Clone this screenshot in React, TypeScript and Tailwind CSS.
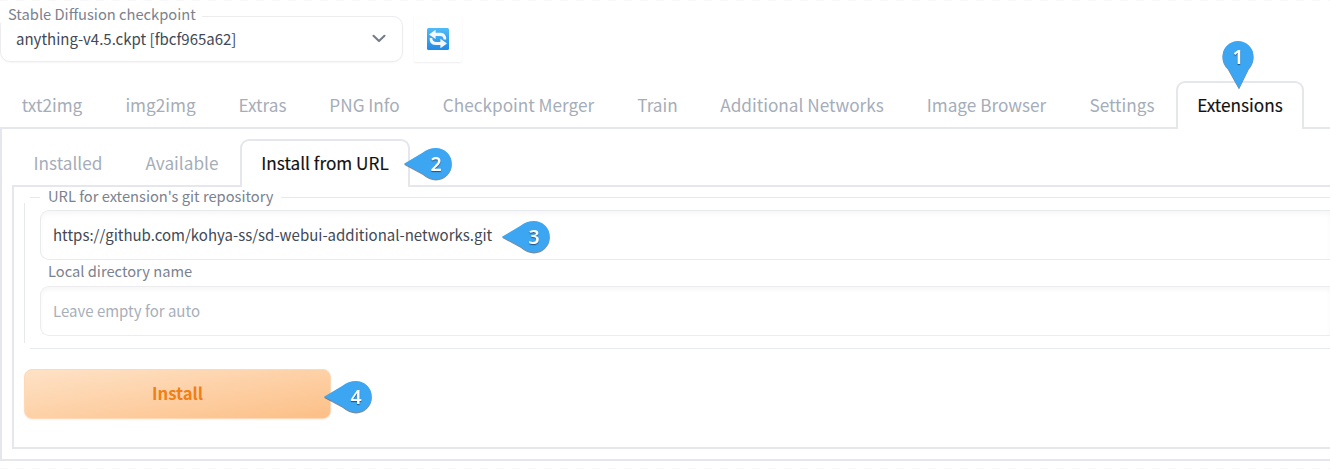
import type { ReactNode } from "react";

type TabProps = { children: ReactNode; active?: boolean; className: string };

function Tab({ children, active, className }: TabProps) {
  return (
    <button
      className={`flex h-[48px] shrink-0 items-center justify-center whitespace-nowrap text-[17.2px] leading-none ${
        active
          ? "rounded-t-[9px] border-[2.4px] border-b-0 border-[#e6e7ec] bg-white pb-[3px] text-[#111] [-webkit-text-stroke:0.15px_#111]"
          : "border-b-2 border-[#e6e7ec] pt-[2px] text-[#a5adb9]"
      } ${className}`}
    >
      {children}
    </button>
  );
}

function Pin({ n, up, className }: { n: number; up?: boolean; className: string }) {
  return (
    <svg
      className={`pointer-events-none absolute overflow-visible drop-shadow-[0_1px_0.5px_rgba(40,60,80,0.6)] ${className}`}
      width="48"
      height="48"
      viewBox="0 0 48 48"
    >
      {up ? (
        <path d="M17 47.5 L5.8 27.5 Q0.5 22.5 0.5 15.5 A15.5 15.5 0 1 1 31.5 15.5 Q31.5 22.5 26.8 27.5 Z" fill="#3da6f2" />
      ) : (
        <path d="M0 15.7 L18.5 4.8 Q24 0 32 0 A15.7 15.7 0 1 1 32 31.4 Q25 31.4 19 26 Z" fill="#3da6f2" />
      )}
      <text
        x={up ? 16 : 32}
        y={up ? 22.5 : 22.8}
        textAnchor="middle"
        className="fill-white font-['Noto_Sans',sans-serif] text-[19.5px] font-semibold [text-shadow:0_1px_1px_rgba(20,50,80,0.7)]"
      >
        {n}
      </text>
    </svg>
  );
}

function RefreshIcon() {
  return (
    <svg width="22" height="22" viewBox="0 0 22 22">
      <defs>
        <linearGradient id="refreshBlue" x1="0" y1="0" x2="0" y2="1">
          <stop offset="0" stopColor="#4fbcf8" />
          <stop offset="1" stopColor="#2389e4" />
        </linearGradient>
      </defs>
      <rect width="22" height="22" rx="1.5" fill="url(#refreshBlue)" />
      <path d="M2 6.4 L8.6 1.8 V4.8 H13.6 Q19.2 5 19.2 11.4 H16.6 Q16.4 8 13.2 8 H8.6 V11 Z" fill="#f4f8fc" />
      <path d="M20 15.4 L13.4 10.8 V13.9 H8.6 Q5.6 13.8 5.2 10 H2.6 Q2.4 17 8.2 17 H13.4 V20.2 Z" fill="#f4f8fc" />
    </svg>
  );
}

function Dashes() {
  return <div className="h-px w-full shrink-0 bg-[repeating-linear-gradient(90deg,#f8f8f9_0_8px,#ffffff_8px_16px)]" />;
}

export default function App() {
  return (
    <div className="relative flex h-[470px] w-[1330px] flex-col overflow-hidden bg-white font-['Noto_Sans_CJK_SC','Noto_Sans',sans-serif]">
      <Dashes />
      {/* Checkpoint selector */}
      <header className="flex h-[80px] shrink-0 items-start pt-[15px]">
        <div className="relative flex h-[46px] w-[403px] items-center justify-between rounded-[10px] border-[1.5px] border-[#ececef] pb-[2px] pl-[15px] pr-[16px] shadow-[0_1px_2px_rgba(0,0,0,0.04)]">
          <label className="absolute left-0 top-[-12px] bg-white pl-[7px] pr-[6px] text-[14.7px] leading-[18px] text-[#7b828f]">
            Stable Diffusion checkpoint
          </label>
          <span className="text-[15px] leading-none text-[#414957]">anything-v4.5.ckpt [fbcf965a62]</span>
          <svg width="14" height="10" viewBox="0 0 14 10" fill="none" stroke="#757c8c" strokeWidth="2.1">
            <path d="M1.5 2.8 L7 8.1 L12.5 2.8" strokeLinecap="round" strokeLinejoin="round" />
          </svg>
        </div>
        <button className="ml-[11px] flex h-[46px] w-[48px] items-center justify-center rounded-[2px] bg-white shadow-[0_1px_2px_rgba(0,0,0,0.07)]">
          <RefreshIcon />
        </button>
      </header>

      {/* Main tabs */}
      <nav className="flex h-[48px] shrink-0">
        <Tab className="w-[104px]">txt2img</Tab>
        <Tab className="w-[113px]">img2img</Tab>
        <Tab className="w-[91px]">Extras</Tab>
        <Tab className="w-[113px]">PNG Info</Tab>
        <Tab className="w-[195px]">Checkpoint Merger</Tab>
        <Tab className="w-[83px]">Train</Tab>
        <Tab className="w-[206px]">Additional Networks</Tab>
        <Tab className="w-[163px]">Image Browser</Tab>
        <Tab className="w-[108px]">Settings</Tab>
        <Tab active className="w-[128px]">Extensions</Tab>
        <div className="flex-1 border-b-2 border-[#e6e7ec]" />
      </nav>

      <main className="flex h-[332px] shrink-0 flex-col border-b-2 border-l-2 border-[#e6e7ec] pl-[10px] pt-[10px]">
        {/* Extension tabs */}
        <nav className="flex h-[48px] shrink-0">
          <Tab className="w-[112px]">Installed</Tab>
          <Tab className="w-[116px]">Available</Tab>
          <Tab active className="w-[170px]">Install from URL</Tab>
          <div className="flex-1 border-b-2 border-[#e6e7ec]" />
        </nav>

        <section className="flex h-[262px] shrink-0 flex-col border-b-2 border-l-2 border-[#e6e7ec] pl-[10px] pt-[10px]">
          <div className="relative flex h-[152px] shrink-0 flex-col border border-r-0 border-[#e8e9ed] pl-[15px]">
            {/* Breaks in the outline at its left corners */}
            <span className="absolute left-[-1px] top-[-1px] h-[6px] w-[6px] bg-white" />
            <span className="absolute bottom-[-1px] left-[-1px] h-[6px] w-[6px] bg-white" />
            <label className="relative mt-[-11px] flex h-[23px] w-fit items-start bg-white pl-[8px] pr-[8px] text-[14.7px] leading-[18px] text-[#7b828f]">
              URL for extension&apos;s git repository
            </label>
            <div className="flex h-[50px] shrink-0 items-center rounded-l-[9px] border-[1.5px] border-r-0 border-[#e9eaed] pb-[2px] pl-[12px] text-[15px] leading-none text-[#414957] shadow-[inset_0_3px_4px_rgba(0,0,0,0.035)]">
              https://github.com/kohya-ss/sd-webui-additional-networks.git
            </div>
            <label className="flex h-[26px] shrink-0 items-center pb-[3px] pl-[8px] text-[14.7px] leading-none text-[#7b828f]">
              Local directory name
            </label>
            <div className="flex h-[50px] shrink-0 items-center rounded-l-[9px] border-[1.5px] border-r-0 border-[#ececef] pb-[2px] pl-[12px] text-[15px] leading-none text-[#a7afba] shadow-[inset_0_3px_4px_rgba(0,0,0,0.035)]">
              Leave empty for auto
            </div>
          </div>
          <button className="mt-[20px] flex h-[50px] w-[307px] shrink-0 items-center justify-center rounded-[8px] border border-[#fdd9b8] bg-gradient-to-br from-[#fee2c6] to-[#fcbf86] pb-[2px] text-[16.7px] font-bold leading-none text-[#ef7f16] shadow-[0_1px_2px_rgba(0,0,0,0.05)]">
            Install
          </button>
        </section>
      </main>
      <div className="h-[7px] shrink-0" />
      <Dashes />

      {/* Numbered step markers */}
      <Pin n={1} up className="left-[1221.5px] top-[41px]" />
      <Pin n={2} className="left-[404px] top-[148px]" />
      <Pin n={3} className="left-[502px] top-[221px]" />
      <Pin n={4} className="left-[324px] top-[381px]" />
    </div>
  );
}
